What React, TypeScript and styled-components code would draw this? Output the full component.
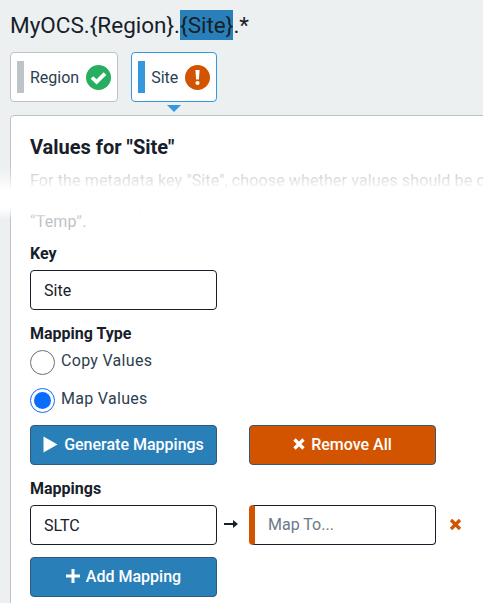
import * as React from "react";
import styled, { createGlobalStyle } from "styled-components";

const GlobalStyle = createGlobalStyle`
    html, body {
        margin: 0;
        height: 100%;
        overflow: hidden;
        background: #ecf0f1;
        font-family: Roboto, "Liberation Sans", sans-serif;
        color: #17202a;
    }
`;

const Page = styled.div`
    position: relative;
    width: 483px;
    height: 603px;
    padding: 10px 0 0 10px;
    box-sizing: border-box;
    overflow: hidden;
`;

const Title = styled.div`
    font-size: 22.5px;
    line-height: 30px;
    height: 30px;
    white-space: nowrap;
`;

const Selected = styled.span`
    display: inline-block;
    background: #2980b9;
`;

const Tabs = styled.div`
    display: flex;
    gap: 13px;
    margin-top: 12px;
`;

const Tab = styled.div<{ $active?: boolean }>`
    position: relative;
    display: flex;
    align-items: center;
    height: 50px;
    box-sizing: border-box;
    padding: 0 6px;
    background: #fff;
    border: 1px solid ${p => (p.$active ? "#3498db" : "#bdc3c7")};
    border-radius: 4px;
    font-size: 16px;
    color: #2c3e50;
`;

const TabBar = styled.span<{ $active?: boolean }>`
    width: 7px;
    height: 32px;
    margin-right: 6px;
    background: ${p => (p.$active ? "#3498db" : "#bdc3c7")};
`;

const TabLabel = styled.span`
    margin-right: 7px;
`;

const Caret = styled.span`
    position: absolute;
    left: 35px;
    top: 52px;
    border-left: 7.5px solid transparent;
    border-right: 7.5px solid transparent;
    border-top: 7px solid #3498db;
`;

const Panel = styled.div`
    width: 620px;
    height: 500px;
    margin-top: 13px;
    padding: 19px;
    box-sizing: border-box;
    background: #fff;
    border: 1px solid #bdc3c7;
    border-radius: 4px;
`;

const Heading = styled.h2`
    margin: 0;
    font-size: 20px;
    line-height: 25px;
    font-weight: 700;
`;

const Description = styled.p`
    margin: 11px 0 0;
    width: 580px;
    height: 62px;
    font-size: 16px;
    line-height: 20.5px;
    letter-spacing: 0.13px;
    color: #2c3e50;
    opacity: 0.32;
`;

const Fade = styled.div`
    position: absolute;
    left: 0;
    right: 0;
    top: 165px;
    height: 55px;
    pointer-events: none;
    background: linear-gradient(
        to bottom,
        rgba(255, 255, 255, 0) 0,
        rgba(255, 255, 255, 0.5) 15px,
        #fff 25px,
        #fff 43px,
        rgba(255, 255, 255, 0) 55px
    );
`;

const Label = styled.div<{ $top: number }>`
    margin-top: ${p => p.$top}px;
    font-size: 16px;
    line-height: 20px;
    font-weight: 700;
    margin-bottom: 6px;
`;

const TextBox = styled.div<{ $muted?: boolean; $accent?: boolean }>`
    display: flex;
    align-items: center;
    width: 187px;
    height: 40px;
    box-sizing: border-box;
    padding-left: 13px;
    padding-bottom: ${p => (p.$accent ? "2px" : "0")};
    background: #fff;
    border: 1px solid #17202a;
    border-left: ${p => (p.$accent ? "6px solid #d35400" : "1px solid #17202a")};
    border-radius: 4px;
    font-size: 16px;
    color: ${p => (p.$muted ? "#6c7a89" : "#17202a")};
`;

const RadioRow = styled.div`
    display: flex;
    align-items: flex-start;
    height: 25px;
    margin-bottom: 13px;
    font-size: 16px;
    line-height: 22px;
    letter-spacing: 0.3px;
    color: #2c3e50;
`;

const Radio = styled.span<{ $checked?: boolean }>`
    display: flex;
    align-items: center;
    justify-content: center;
    width: 25px;
    height: 25px;
    box-sizing: border-box;
    margin-right: 6px;
    border-radius: 50%;
    background: #fff;
    border: 1px solid ${p => (p.$checked ? "#0a6cff" : "#6d6d6d")};
`;

const RadioDot = styled.span`
    width: 17px;
    height: 17px;
    border-radius: 50%;
    background: #0a6cff;
`;

const ButtonRow = styled.div`
    display: flex;
    gap: 32px;
    margin-top: -1px;
`;

const Button = styled.div<{ $danger?: boolean }>`
    display: flex;
    align-items: center;
    justify-content: center;
    gap: 6px;
    width: 187px;
    height: 40px;
    box-sizing: border-box;
    padding-bottom: 2px;
    border: 1px solid #34587a;
    border-radius: 4px;
    background: ${p => (p.$danger ? "#d35400" : "#2980b9")};
    color: #fff;
    font-size: 16px;
    font-weight: 500;
`;

const MappingRow = styled.div`
    display: flex;
    align-items: center;
`;

const Arrow = styled.svg`
    display: block;
    width: 14px;
    height: 10px;
    margin: 0 11px 2px 7px;
`;

const RemoveIcon = styled.svg`
    display: block;
    width: 13px;
    height: 13px;
    margin: 0 0 2px 13px;
`;

const AddButton = styled(Button)`
    margin-top: 12px;
`;

const CheckBadge = () => (
    <svg width="25" height="25" viewBox="0 0 25 25">
        <circle cx="12.5" cy="12.5" r="12.5" fill="#27ae60" />
        <path d="M6 12.5l4.6 4.4 8.4-8.2" fill="none" stroke="#fff" strokeWidth="3.8" />
    </svg>
);

const AlertBadge = () => (
    <svg width="25" height="25" viewBox="0 0 25 25">
        <circle cx="12.5" cy="12.5" r="12.5" fill="#d35400" />
        <path d="M10.4 5h4.2l-.7 9.5h-2.8z" fill="#fff" />
        <circle cx="12.5" cy="18" r="2.1" fill="#fff" />
    </svg>
);

const PlayIcon = () => (
    <svg width="15" height="17" viewBox="0 0 15 17">
        <path d="M0.5 0.5v16L14.5 8.5z" fill="#fff" />
    </svg>
);

const CloseIcon = () => (
    <svg width="12" height="12" viewBox="0 0 12 12">
        <path d="M1.5 1.5l9 9M10.5 1.5l-9 9" stroke="#fff" strokeWidth="3.2" />
    </svg>
);

const PlusIcon = () => (
    <svg width="14" height="14" viewBox="0 0 14 14">
        <path d="M7 0v14M0 7h14" stroke="#fff" strokeWidth="3" />
    </svg>
);

export default function App() {
    return <>
        <GlobalStyle />
        <Page>
            <Title>MyOCS.{"{Region}"}.<Selected>{"{Site}"}</Selected>.*</Title>
            <Tabs>
                <Tab>
                    <TabBar />
                    <TabLabel>Region</TabLabel>
                    <CheckBadge />
                </Tab>
                <Tab $active>
                    <TabBar $active />
                    <TabLabel>Site</TabLabel>
                    <AlertBadge />
                    <Caret />
                </Tab>
            </Tabs>
            <Panel>
                <Heading>Values for "Site"</Heading>
                <Description>
                    For the metadata key "Site", choose whether values should be copied
                    <br />
                    directly or mapped to new values.
                    <br />
                    “Temp”.
                </Description>
                <Label $top={11}>Key</Label>
                <TextBox>Site</TextBox>
                <Label $top={14}>Mapping Type</Label>
                <RadioRow><Radio />Copy Values</RadioRow>
                <RadioRow><Radio $checked><RadioDot /></Radio>Map Values</RadioRow>
                <ButtonRow>
                    <Button><PlayIcon />Generate Mappings</Button>
                    <Button $danger><CloseIcon />Remove All</Button>
                </ButtonRow>
                <Label $top={14}>Mappings</Label>
                <MappingRow>
                    <TextBox>SLTC</TextBox>
                    <Arrow viewBox="0 0 14 10">
                        <path d="M0 5h10" stroke="#17202a" strokeWidth="2" />
                        <path d="M9 1l5 4-5 4z" fill="#17202a" />
                    </Arrow>
                    <TextBox $accent $muted>Map To...</TextBox>
                    <RemoveIcon viewBox="0 0 13 13">
                        <path d="M2 2l9 9M11 2l-9 9" stroke="#d35400" strokeWidth="3.2" />
                    </RemoveIcon>
                </MappingRow>
                <AddButton><PlusIcon />Add Mapping</AddButton>
            </Panel>
            <Fade />
        </Page>
    </>;
}
